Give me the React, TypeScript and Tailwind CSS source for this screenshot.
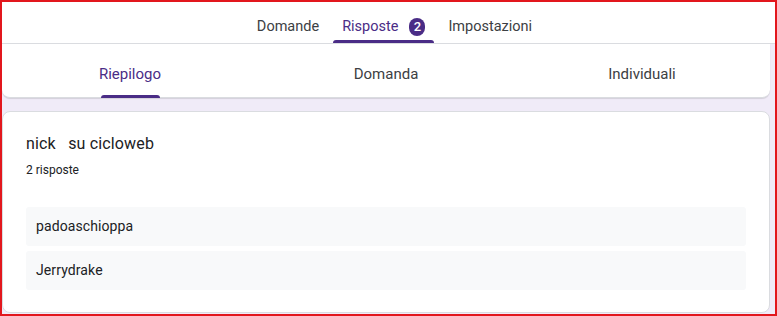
import React from "react";

export default function App() {
  const font = { fontFamily: "Roboto, 'Noto Sans', sans-serif" };
  return (
    <div
      className="w-[777px] h-[316px] border-2 border-[#e2171d] bg-[#f0ebf8] overflow-hidden flex flex-col"
      style={font}
    >
      <div className="h-[42px] shrink-0 bg-white border-b border-[#dadce0] flex justify-center items-stretch gap-[4px] pl-[12px]">
        <div className="relative px-[10px] flex items-center text-[14.5px] text-[#3c4043] pt-[8px]">
          Domande
        </div>
        <div className="relative px-[9px] flex items-center gap-[11px] text-[14.5px] text-[#4a2c86] pt-[8px]">
          <span>Risposte</span>
          <span className="w-[16px] h-[18px] rounded-full bg-[#4a2c86] text-white text-[13px] font-medium flex items-center justify-center leading-none">
            2
          </span>
          <span className="absolute left-0 right-0 bottom-0 h-[3px] rounded-t-[3px] bg-[#4a2c86]" />
        </div>
        <div className="relative px-[10px] flex items-center text-[14.5px] text-[#3c4043] pt-[8px]">
          Impostazioni
        </div>
      </div>

      <div className="flex-1 flex flex-col pr-[5px]">
        <div className="h-[54px] bg-white rounded-b-[8px] shadow-[0_1px_1px_rgba(0,0,0,0.12)] border-b border-[#dadce0] grid grid-cols-3">
          <div className="flex justify-center">
            <div className="relative flex items-center text-[15px] text-[#4a2c86] pt-[7px]">
              Riepilogo
              <span className="absolute left-[2px] right-[1px] bottom-[-1px] h-[3px] rounded-t-[3px] bg-[#4a2c86]" />
            </div>
          </div>
          <div className="flex justify-center items-center text-[15px] text-[#3c4043] pt-[7px]">
            Domanda
          </div>
          <div className="flex justify-center items-center text-[15px] text-[#3c4043] pt-[7px]">
            Individuali
          </div>
        </div>

        <div className="mt-[13px] bg-white rounded-[8px] border border-[#dadce0] px-[23px] pt-[21px] pb-[22px]">
          <div className="text-[16px] text-[#202124] whitespace-pre leading-[22px] tracking-[0.15px]">nick   su cicloweb</div>
          <div className="mt-[7px] text-[12px] text-[#202124] leading-[16px]">2 risposte</div>
          <div className="mt-[29px] flex flex-col gap-[5px]">
            <div className="h-[39px] bg-[#f8f9fa] rounded-[3px] flex items-center px-[10px] text-[14px] text-[#202124] tracking-[0.1px]">
              padoaschioppa
            </div>
            <div className="h-[39px] bg-[#f8f9fa] rounded-[3px] flex items-center px-[10px] text-[14px] text-[#202124] tracking-[0.1px]">
              Jerrydrake
            </div>
          </div>
        </div>
      </div>
    </div>
  );
}
